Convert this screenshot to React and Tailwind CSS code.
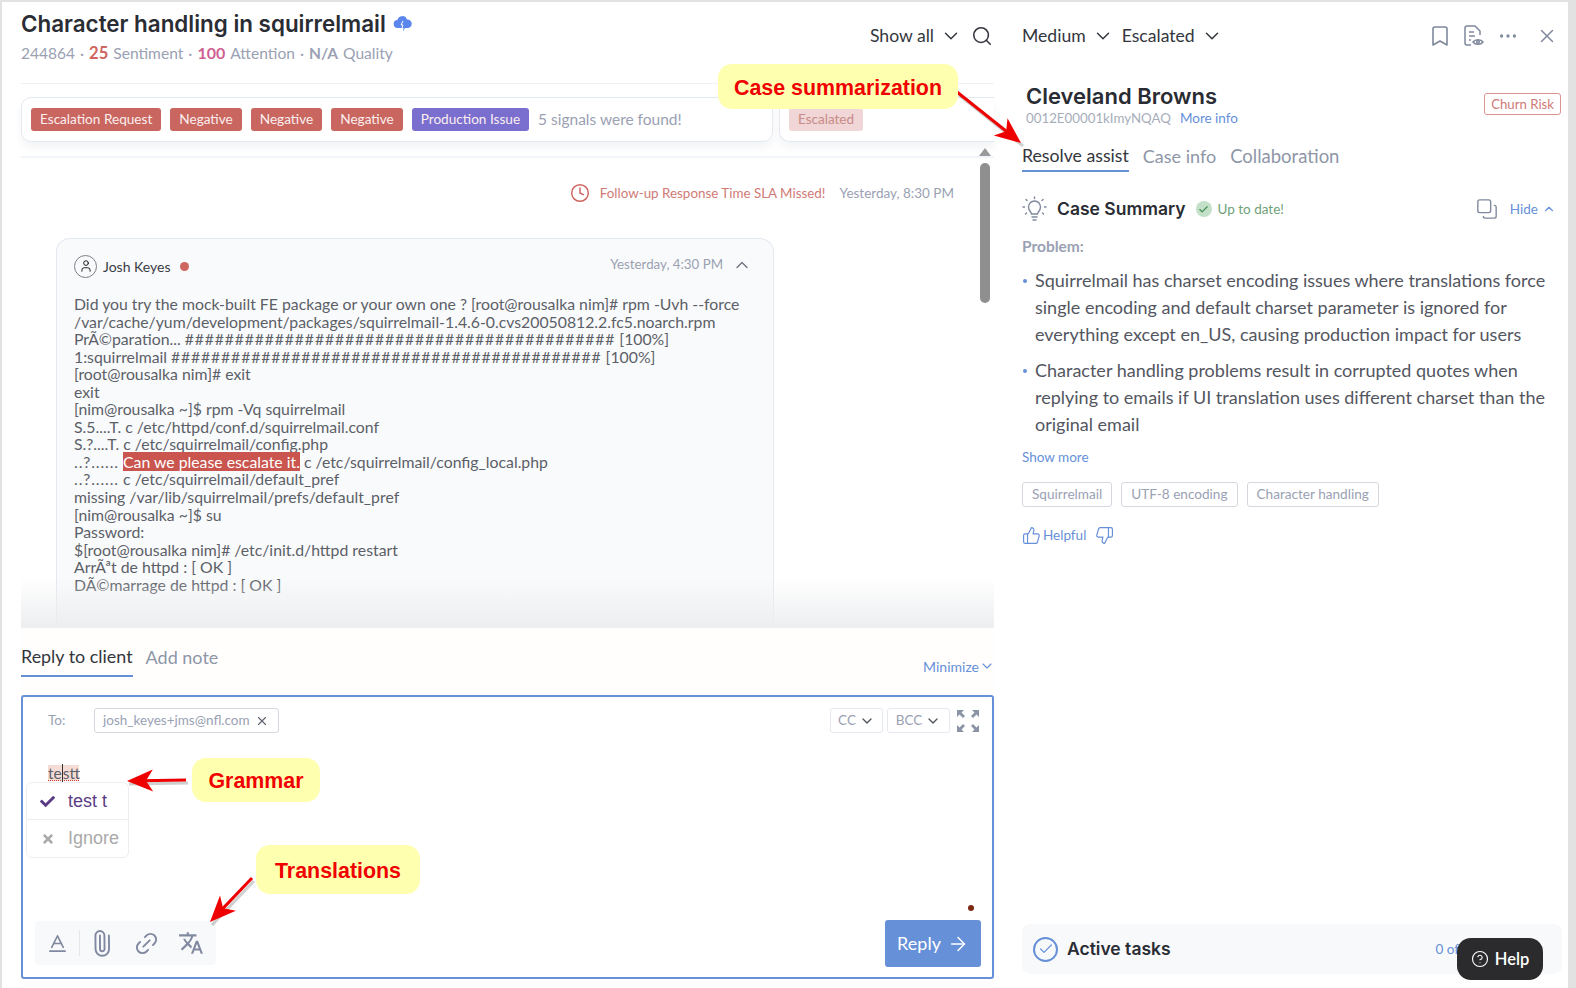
import React from 'react';
import {
  Search, ChevronDown, ChevronUp, Bookmark, MoreHorizontal, X, Copy, ThumbsUp, ThumbsDown,
  Paperclip, Link2, ArrowRight, Clock, User, CircleHelp, Check, Baseline,
} from 'lucide-react';
import { FaCheck, FaTimes } from 'react-icons/fa';
import { MdTranslate } from 'react-icons/md';

const bodyFont = "font-['Lato','Open_Sans',sans-serif]";
const headFont = "font-['Inter','Liberation_Sans',sans-serif]";

const hashes = '###########################################';

const logLines = [
  'Did you try the mock-built FE package or your own one ? [root@rousalka nim]# rpm -Uvh --force',
  '/var/cache/yum/development/packages/squirrelmail-1.4.6-0.cvs20050812.2.fc5.noarch.rpm',
  <>PrÃ©paration... <span className="tracking-[0.85px]">{hashes}</span> [100%]</>,
  <>1:squirrelmail <span className="tracking-[0.85px]">{hashes}</span> [100%]</>,
  '[root@rousalka nim]# exit',
  'exit',
  '[nim@rousalka ~]$ rpm -Vq squirrelmail',
  'S.5....T. c /etc/httpd/conf.d/squirrelmail.conf',
  'S.?....T. c /etc/squirrelmail/config.php',
  <><span className="tracking-[0.9px]">..?......</span> <span className="bg-[#c9554e] text-white">Can we please escalate it.</span> c /etc/squirrelmail/config_local.php</>,
  <><span className="tracking-[0.9px]">..?......</span> c /etc/squirrelmail/default_pref</>,
  'missing /var/lib/squirrelmail/prefs/default_pref',
  '[nim@rousalka ~]$ su',
  'Password:',
  '$[root@rousalka nim]# /etc/init.d/httpd restart',
  'ArrÃªt de httpd : [ OK ]',
  'DÃ©marrage de httpd : [ OK ]',
];

const Badge = ({ children, color }) => (
  <span className={`h-[23px] px-[9px] rounded-[3px] text-[13.6px] leading-[23px] text-[#fbeeee] whitespace-nowrap ${color}`}>{children}</span>
);

const Tag = ({ children }) => (
  <span className="h-[25px] px-[9px] border border-[#d5d8df] rounded-[3px] text-[13.6px] leading-[22px] text-[#9aa1b3]">{children}</span>
);

const Callout = ({ children, className }) => (
  <div className={`absolute flex items-center justify-center pt-[3px] bg-[#ffffb0] rounded-[14px] font-['Liberation_Sans',sans-serif] font-bold text-[#f00000] text-[21.4px] ${className}`}>{children}</div>
);

const RedArrow = ({ x1, y1, x2, y2 }) => {
  const a = Math.atan2(y2 - y1, x2 - x1);
  const p = (d, s) => `${x2 - d * Math.cos(a) - s * Math.sin(a)},${y2 - d * Math.sin(a) + s * Math.cos(a)}`;
  return (
    <g>
      <line x1={x1 + 2} y1={y1 + 3} x2={x2 + 2} y2={y2 + 3} stroke="#00000030" strokeWidth="3" />
      <line x1={x1} y1={y1} x2={x2 - 14 * Math.cos(a)} y2={y2 - 14 * Math.sin(a)} stroke="#ee0000" strokeWidth="3" />
      <polygon points={`${x2},${y2} ${p(26, 11)} ${p(19, 0)} ${p(26, -11)}`} fill="#ee0000" />
    </g>
  );
};

const ExpandIcon = () => (
  <svg width="24" height="24" viewBox="0 0 24 24" fill="#8b93a7">
    <path d="M1 1h7L5.500 3.500 9 7 7 9 3.500 5.500 1 8z" />
    <path d="M23 1h-7l2.500 2.500L15 7l2 2 3.500-3.500L23 8z" />
    <path d="M1 23h7l-2.500-2.500L9 17l-2-2-3.500 3.500L1 16z" />
    <path d="M23 23h-7l2.500-2.500L15 17l2-2 3.500 3.500L23 16z" />
  </svg>
);

const DocEye = () => (
  <svg width="22" height="24" viewBox="0 0 22 24" fill="none" stroke="#7f889c" strokeWidth="1.5">
    <path d="M8 21H4a2 2 0 0 1-2-2V4a2 2 0 0 1 2-2h8l5 5v4" />
    <path d="M6 8h5M6 12h6M6 16h2" />
    <path d="M10 18c2-3 8-3 10 0-2 3-8 3-10 0z" />
    <circle cx="15" cy="18" r="1.3" />
  </svg>
);

const BulbRays = () => (
  <svg width="25" height="27" viewBox="0 0 25 27" fill="none" stroke="#7f889c" strokeWidth="1.4" strokeLinecap="round">
    <path d="M9.500 18c0-2-3-3-3-7a6 6 0 0 1 12 0c0 4-3 5-3 7z" />
    <path d="M10 21h5M11 24h3" />
    <path d="M12.500 1v1.500M4 3.500l1 1M21 3.500l-1 1M1 11h1.500M22.500 11H24M3.500 18l1-1M21.500 18l-1-1" />
  </svg>
);

export default function App() {
  return (
    <div className={`relative w-[1576px] h-[988px] overflow-hidden bg-white border-t-2 border-l-2 border-r-[8px] border-[#e2e2e2] flex ${bodyFont}`}>
      {/* left column */}
      <div className="w-[992px] pl-[19px] flex flex-col shrink-0">
        <div className="h-[82px] flex justify-between border-b border-[#eef1f5]">
          <div>
            <div className="flex items-center gap-[7px] mt-[8px]">
              <h1 className={`text-[22.4px] leading-[28px] font-semibold text-[#2a2c33] ${headFont}`}>Character handling in squirrelmail</h1>
              <svg width="19" height="16" viewBox="0 0 19 16" fill="#5b86ee"><path d="M5 12a4 4 0 0 1-.6-8A5 5 0 0 1 14 3.500 4.200 4.200 0 0 1 15 12h-3l-2 3.500.6-3.500z" /><path d="M10 5l-2 4h2l-1 3" stroke="#fff" strokeWidth="1" fill="none" /></svg>
            </div>
            <div className="mt-[5px] text-[15.6px] leading-[20px] text-[#9aa1b3] whitespace-nowrap flex items-baseline">
              <span className="text-[15.5px]">244864</span>
              <span className="mx-[5px]">·</span>
              <b className="text-[#cf6660] text-[16.6px]">25</b>
              <span className="ml-[5px]">Sentiment</span>
              <span className="mx-[5px]">·</span>
              <b className="text-[#cf5f92] text-[16px]">100</b>
              <span className="ml-[5px]">Attention</span>
              <span className="mx-[5px]">·</span>
              <b className="text-[15.5px]">N/A</b>
              <span className="ml-[5px]">Quality</span>
            </div>
          </div>
          <div className="flex items-center h-[68px] text-[17.6px] text-[#33363d]">
            <span>Show all</span>
            <ChevronDown size={22} className="ml-[6px]" strokeWidth={1.6} />
            <Search size={22} className="ml-[9px] mr-[1px]" strokeWidth={1.7} />
          </div>
        </div>

        <div className="h-[74px] pt-[13px] flex gap-[6px] border-b-2 border-[#f1f4f8]">
          <div className="w-[752px] h-[45px] border border-[#e4e8ef] rounded-[10px] flex items-center gap-[9px] px-[9px] shadow-[0_6px_10px_#f3f4f6]">
            <Badge color="bg-[#c9665f]">Escalation Request</Badge>
            <Badge color="bg-[#c9665f]">Negative</Badge>
            <Badge color="bg-[#c9665f]">Negative</Badge>
            <Badge color="bg-[#c9665f]">Negative</Badge>
            <Badge color="bg-[#7a6fce]">Production Issue</Badge>
            <span className="text-[15.5px] text-[#9aa1b3]">5 signals were found!</span>
          </div>
          <div className="flex-1 h-[45px] border border-[#e4e8ef] border-r-0 rounded-l-[10px] flex items-center px-[9px] shadow-[0_6px_10px_#f3f4f6]">
            <span className="h-[23px] px-[9px] rounded-[3px] text-[13.5px] leading-[23px] text-[#c98a88] bg-[#f0d6d6]">Escalated</span>
          </div>
        </div>

        {/* thread */}
        <div className="relative h-[470px] flex">
          <div className="flex-1 min-w-0">
            <div className="h-[70px] pr-[24px] flex items-center justify-end">
              <Clock size={20} className="text-[#cf6660] mr-[10px]" strokeWidth={1.8} />
              <span className="text-[13.4px] text-[#cf7a76]">Follow-up Response Time SLA Missed!</span>
              <span className="text-[13.5px] text-[#9aa1b3] ml-[14px]">Yesterday, 8:30 PM</span>
            </div>
            <div className="ml-[35px] w-[718px] h-[390px] mt-[10px] overflow-hidden bg-[#f9fafb] border border-[#e4e8ef] border-b-0 rounded-t-[14px] px-[17px] pt-[13px]">
              <div className="flex items-center h-[28px]">
                <span className="w-[23px] h-[23px] rounded-full border border-[#7d7f87] flex items-center justify-center"><User size={14} strokeWidth={1.5} /></span>
                <span className="ml-[6px] text-[14px] text-[#3a3d44]">Josh Keyes</span>
                <span className="ml-[9px] w-[9px] h-[9px] rounded-full bg-[#cf6660]"></span>
                <span className="ml-auto text-[13.3px] text-[#9aa1b3] mb-[3px]">Yesterday, 4:30 PM</span>
                <ChevronUp size={20} className="ml-[9px] mr-[4px] mb-[3px] text-[#6a6f7c]" strokeWidth={1.5} />
              </div>
              <div className="mt-[15px] text-[15.8px] leading-[17.55px] text-[#5c5f68] whitespace-nowrap">
                {logLines.map((line, i) => <div key={i}>{line}</div>)}
              </div>
            </div>
          </div>
          {/* scrollbar */}
          <div className="w-[13px] mr-[3px] shrink-0 flex flex-col items-center">
            <div className="mt-[-10px] w-0 h-0 border-x-[6px] border-x-transparent border-b-[8px] border-b-[#9a9a9a]"></div>
            <div className="mt-[7px] w-[10px] h-[140px] rounded-[5px] bg-[#8f8f8f]"></div>
          </div>
          <div className="absolute left-0 right-0 bottom-0 h-[50px] bg-gradient-to-b from-transparent to-[#eceef0] pointer-events-none"></div>
        </div>

        {/* reply */}
        <div className="flex-1 bg-[#fffefc]">
          <div className="flex justify-between h-[67px]">
            <div className="flex gap-[13px] h-[49px]">
              <span className="h-[49px] pt-[16px] border-b-2 border-[#6690d8] text-[17.9px] leading-[24px] text-[#33363d]">Reply to client</span>
              <span className="pt-[17px] text-[18px] leading-[24px] text-[#8e96a8]">Add note</span>
            </div>
            <span className="mt-[28px] mr-[-1px] flex items-center h-[20px] text-[#6690d8] text-[14px]">Minimize<ChevronDown size={16} strokeWidth={1.6} /></span>
          </div>
          <div className="relative h-[284px] bg-white border-2 border-[#6690d8] rounded-[3px] flex flex-col">
            <div className="flex items-center h-[25px] mt-[11px] pl-[25px] pr-[12px]">
              <span className="w-[46px] text-[13.5px] text-[#9aa1b3]">To:</span>
              <span className="h-[25px] pl-[8px] pr-[9px] flex items-center border border-[#d5d8df] rounded-[3px] text-[13.5px] text-[#9aa1b3]">josh_keyes+jms@nfl.com<X size={14} className="ml-[5px] text-[#5f6470]" /></span>
              <span className="ml-auto h-[25px] w-[53px] justify-center flex items-center border border-[#e4e8ef] rounded-[3px] text-[13.5px] text-[#9aa1b3]">CC<ChevronDown size={16} className="ml-[3px] text-[#4f535d]" /></span>
              <span className="ml-[4px] h-[25px] w-[63px] justify-center flex items-center border border-[#e4e8ef] rounded-[3px] text-[13.5px] text-[#9aa1b3]">BCC<ChevronDown size={16} className="ml-[3px] text-[#4f535d]" /></span>
              <span className="ml-[6px]"><ExpandIcon /></span>
            </div>
            <div className="mt-[32px] ml-[25px] w-[31px] h-[16px] bg-[#f6dcd6] text-[15.5px] leading-[17px] text-[#5c5f68] border-b border-dotted border-[#d04030]">te<span className="border-l border-[#333]">s</span>tt</div>
            <div className="ml-[3px] mt-[1px] w-[103px] bg-white border border-[#eceef1] rounded-[6px] text-[18px] font-['Liberation_Sans',sans-serif]">
              <div className="h-[37px] flex items-center pl-[13px] gap-[13px] border-b border-[#eceef1] text-[#5c3b85]"><FaCheck size={15} />test t</div>
              <div className="h-[37px] flex items-center pl-[14px] gap-[13px] text-[#a9a9a9]"><FaTimes size={14} />Ignore</div>
            </div>
            <span className="absolute right-[18px] top-[208px] w-[6px] h-[6px] rounded-full bg-[#7c2a12]"></span>
            <div className="mt-auto mb-[10px] ml-[12px] mr-[11px] flex items-end justify-between">
              <div className="w-[181px] h-[44px] mb-[2px] bg-[#f8f9fb] rounded-[4px] flex items-center pl-[11px] text-[#8089a0]">
                <Baseline size={23} strokeWidth={1.7} />
                <span className="ml-[10px] w-px h-[26px] bg-[#e4e6ea]"></span>
                <Paperclip size={27} className="ml-[8px] -rotate-45" strokeWidth={1.7} />
                <Link2 size={27} className="ml-[18px] -rotate-45" strokeWidth={1.7} />
                <MdTranslate size={26} className="ml-[18px]" />
              </div>
              <div className="w-[96px] h-[47px] rounded-[3px] bg-[#6690d8] flex items-center justify-center gap-[6px] text-white text-[18px]">Reply<ArrowRight size={22} strokeWidth={1.6} /></div>
            </div>
          </div>
        </div>
      </div>

      {/* right column */}
      <div className="flex-1 min-w-0 pl-[28px] pr-[6px] flex flex-col">
        <div className="h-[68px] flex items-center text-[17.6px] text-[#33363d] whitespace-nowrap">
          <span>Medium</span>
          <ChevronDown size={22} className="ml-[6px]" strokeWidth={1.6} />
          <span className="ml-[8px]">Escalated</span>
          <ChevronDown size={22} className="ml-[6px]" strokeWidth={1.6} />
          <Bookmark size={24} className="ml-auto text-[#7f889c]" strokeWidth={1.6} />
          <span className="ml-[11px]"><DocEye /></span>
          <MoreHorizontal size={22} className="ml-[12px] text-[#7f889c]" strokeWidth={1.6} />
          <X size={22} className="ml-[17px] mr-[4px] text-[#7f889c]" strokeWidth={1.6} />
        </div>
        <div className="flex justify-between pl-[4px]">
          <div>
            <h2 className={`mt-[12px] text-[22px] leading-[28px] font-semibold text-[#2a2c33] ${headFont}`}>Cleveland Browns</h2>
            <div className="text-[13.3px] leading-[16px] text-[#a7adbb] whitespace-nowrap">0012E00001kImyNQAQ<span className="ml-[9px] text-[13.5px] text-[#6690d8]">More info</span></div>
          </div>
          <span className="mt-[23px] mr-[1px] h-[22px] px-[6px] border border-[#dc9490] rounded-[3px] text-[13.2px] leading-[20px] text-[#cf7a76]">Churn Risk</span>
        </div>
        <div className="flex gap-[14px] mt-[17px] h-[35px] text-[18px] text-[#8e96a8]">
          <span className="border-b-2 border-[#6690d8] text-[#33363d] text-[17.7px] h-[29px] leading-[26px]">Resolve assist</span>
          <span className="leading-[26px]">Case info</span>
          <span className="leading-[26px] text-[18.5px]">Collaboration</span>
        </div>
        <div className="flex items-center h-[28px] mt-[17px]">
          <BulbRays />
          <span className={`ml-[10px] text-[17.5px] font-semibold text-[#2a2c33] ${headFont}`}>Case Summary</span>
          <span className="ml-[10px] w-[16px] h-[16px] rounded-full bg-[#c3e0c8] flex items-center justify-center"><Check size={11} className="text-[#3f8a4f]" strokeWidth={2.5} /></span>
          <span className="ml-[6px] text-[13.5px] text-[#6f9f78]">Up to date!</span>
          <Copy size={22} className="ml-auto text-[#7f889c] rotate-180" strokeWidth={1.5} />
          <span className="ml-[12px] text-[13.5px] text-[#6690d8]">Hide</span>
          <ChevronUp size={14} className="ml-[4px] mr-[6px] text-[#6690d8]" />
        </div>
        <div className="mt-[13px] text-[15.5px] leading-[20px] font-bold text-[#9aa1b3]">Problem:</div>
        <ul className="mt-[11px] text-[18px] leading-[27px] text-[#53565f] whitespace-nowrap">
          <li className="pl-[13px] relative"><span className="absolute left-[1px] top-[12px] w-[4px] h-[4px] rounded-full bg-[#6690d8]"></span>Squirrelmail has charset encoding issues where translations force<br />single encoding and default charset parameter is ignored for<br />everything except en_US, causing production impact for users</li>
          <li className="pl-[13px] relative mt-[9px]"><span className="absolute left-[1px] top-[12px] w-[4px] h-[4px] rounded-full bg-[#6690d8]"></span>Character handling problems result in corrupted quotes when<br />replying to emails if UI translation uses different charset than the<br />original email</li>
        </ul>
        <div className="mt-[9px] text-[13.5px] leading-[20px] text-[#6690d8]">Show more</div>
        <div className="flex gap-[9px] mt-[15px]">
          <Tag>Squirrelmail</Tag>
          <Tag>UTF-8 encoding</Tag>
          <Tag>Character handling</Tag>
        </div>
        <div className="flex items-center mt-[18px] text-[13.5px] text-[#6690d8]">
          <ThumbsUp size={19} strokeWidth={1.5} />
          <span className="ml-[2px]">Helpful</span>
          <ThumbsDown size={19} className="ml-[9px]" strokeWidth={1.5} />
        </div>
        <div className="mt-auto mb-[14px] h-[50px] bg-[#f8f9fb] rounded-[8px] flex items-center pl-[11px]">
          <span className="w-[25px] h-[25px] rounded-full border-2 border-[#6690d8] flex items-center justify-center"><Check size={16} className="text-[#6690d8]" strokeWidth={1.8} /></span>
          <span className={`ml-[9px] text-[17.5px] font-semibold text-[#2a2c33] ${headFont}`}>Active tasks</span>
          <span className="ml-auto mr-[103px] text-[13.5px] text-[#6690d8]">0 of</span>
        </div>
      </div>

      {/* help button over the tasks bar */}
      <div className="absolute left-[1455px] top-[936px] w-[86px] h-[42px] rounded-[14px] bg-[#2b2b2d] flex items-center justify-center gap-[6px] text-white text-[16.5px] font-semibold"><CircleHelp size={18} strokeWidth={1.5} />Help</div>

      {/* screenshot annotations */}
      <svg className="absolute left-[-2px] top-[-2px] pointer-events-none" width="1576" height="988">
        <RedArrow x1={957} y1={92} x2={1021} y2={143} />
        <RedArrow x1={186} y1={780} x2={127} y2={781} />
        <RedArrow x1={252} y1={878} x2={210} y2={922} />
      </svg>
      <Callout className="left-[716px] top-[62px] w-[240px] h-[45px]">Case summarization</Callout>
      <Callout className="left-[190px] top-[756px] w-[128px] h-[44px]">Grammar</Callout>
      <Callout className="left-[254px] top-[843px] w-[164px] h-[49px]">Translations</Callout>
    </div>
  );
}
